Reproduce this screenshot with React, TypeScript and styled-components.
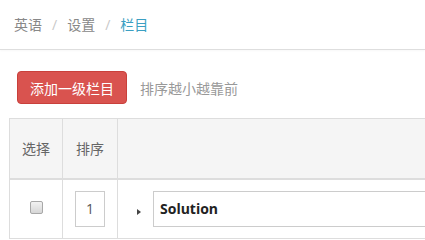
import React from "react";
import styled, { createGlobalStyle } from "styled-components";

const GlobalStyle = createGlobalStyle`
  html, body {
    margin: 0;
    padding: 0;
    background: #fff;
    overflow: hidden;
  }
  body {
    font-family: "Open Sans", "Noto Sans CJK SC", sans-serif;
    font-size: 14px;
    color: #333;
  }
  * {
    box-sizing: border-box;
  }
`;

const Page = styled.div`
  width: 100vw;
  height: 100vh;
  overflow: hidden;
`;

const Breadcrumb = styled.nav`
  display: flex;
  align-items: center;
  height: 50px;
  padding: 0 0 1px 14px;
  border-bottom: 1px solid #dedede;
  box-shadow: 0 1px 2px rgba(0, 0, 0, 0.03);
  color: #888;
`;

const Crumb = styled.span<{ $active?: boolean }>`
  color: ${(p) => (p.$active ? "#3b9fc2" : "#888")};
`;

const Sep = styled.span`
  color: #c8c8c8;
  padding: 0 10px 0 10px;
`;

const Toolbar = styled.div`
  display: flex;
  align-items: center;
  gap: 13px;
  padding: 21px 17px 0;
`;

const DangerButton = styled.button`
  width: 110px;
  height: 33px;
  border: 1px solid #c9403b;
  border-radius: 4px;
  background: #d9534f;
  color: #fff;
  font-family: inherit;
  font-size: 14px;
  padding: 0;
`;

const Hint = styled.span`
  color: #999;
  font-size: 14px;
`;

const TableWrap = styled.div`
  padding: 14px 0 0 9px;
`;

const Table = styled.table`
  width: 880px;
  border-collapse: collapse;
  border: 1px solid #ddd;
`;

const Th = styled.th<{ $w?: number }>`
  width: ${(p) => (p.$w ? `${p.$w}px` : "auto")};
  height: 60px;
  background: #f5f5f5;
  border: 1px solid #ddd;
  border-bottom: 2px solid #ddd;
  color: #666;
  font-weight: normal;
  text-align: center;
  vertical-align: middle;
  padding: 0;
`;

const Td = styled.td<{ $align?: string }>`
  border: 1px solid #ddd;
  padding: 11px 0 0;
  text-align: ${(p) => p.$align || "center"};
  vertical-align: top;
  height: 60px;
`;

const Check = styled.span`
  display: inline-block;
  width: 13px;
  height: 13px;
  margin-top: 10px;
  border: 1px solid #a8a8a8;
  border-radius: 2px;
  background: linear-gradient(#f2f2f2, #d6d6d6);
`;

const SortInput = styled.input`
  width: 30px;
  height: 36px;
  border: 1px solid #ccc;
  text-align: center;
  font-family: inherit;
  font-size: 14px;
  color: #555;
  padding: 0;
  outline: none;
`;

const NameCell = styled.div`
  display: flex;
  align-items: center;
  padding-left: 19px;
`;

const Caret = styled.span`
  width: 0;
  height: 0;
  margin-top: 7px;
  border-top: 3px solid transparent;
  border-bottom: 3px solid transparent;
  border-left: 4px solid #444;
  margin-right: 12px;
`;

const NameInput = styled.input`
  width: 600px;
  height: 36px;
  border: 1px solid #ccc;
  padding: 0 6px;
  font-family: "Open Sans", "Noto Sans CJK SC", sans-serif;
  font-size: 14px;
  font-weight: bold;
  color: #222;
  outline: none;
`;

export default function App() {
  return (
    <Page>
      <GlobalStyle />
      <Breadcrumb>
        <Crumb>英语</Crumb>
        <Sep>/</Sep>
        <Crumb>设置</Crumb>
        <Sep>/</Sep>
        <Crumb $active>栏目</Crumb>
      </Breadcrumb>
      <Toolbar>
        <DangerButton>添加一级栏目</DangerButton>
        <Hint>排序越小越靠前</Hint>
      </Toolbar>
      <TableWrap>
        <Table>
          <thead>
            <tr>
              <Th $w={53}>选择</Th>
              <Th $w={55}>排序</Th>
              <Th />
            </tr>
          </thead>
          <tbody>
            <tr>
              <Td>
                <Check />
              </Td>
              <Td>
                <SortInput defaultValue="1" />
              </Td>
              <Td $align="left">
                <NameCell>
                  <Caret />
                  <NameInput defaultValue="Solution" />
                </NameCell>
              </Td>
            </tr>
          </tbody>
        </Table>
      </TableWrap>
    </Page>
  );
}
